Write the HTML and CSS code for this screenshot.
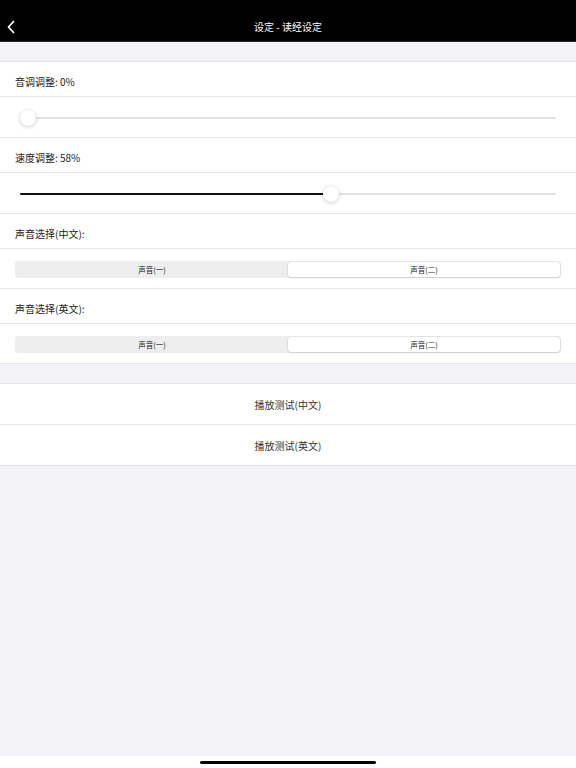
FILE: index.html
```html
<!DOCTYPE html>
<html lang="zh">
<head>
<meta charset="utf-8">
<link rel="stylesheet" href="styles.css">
</head>
<body>
<div class="screen">
  <header class="nav">
    <svg class="back" width="10" height="14" viewBox="0 0 10 14"><path d="M7.5 1.5 L2.5 7 L7.5 12.5" fill="none" stroke="#fff" stroke-width="1.8" stroke-linecap="round" stroke-linejoin="round"/></svg>
    <div class="title">设定 - 读经设定</div>
  </header>
  <div class="gap"></div>
  <section class="group">
    <div class="row label">音调调整: 0%</div>
    <div class="row slider-row">
      <div class="slider">
        <div class="track"></div>
        <div class="fill" style="width:0%"></div>
        <div class="thumb" style="left:calc(8px + 0 * (100% - 16px))"></div>
      </div>
    </div>
    <div class="row label">速度调整: 58%</div>
    <div class="row slider-row">
      <div class="slider">
        <div class="track"></div>
        <div class="fill" style="width:57%"></div>
        <div class="thumb" style="left:calc(9px + 0.58 * (100% - 16px))"></div>
      </div>
    </div>
    <div class="row label">声音选择(中文):</div>
    <div class="row seg-row">
      <div class="seg">
        <div class="seg-item">声音(一)</div>
        <div class="seg-item active">声音(二)</div>
      </div>
    </div>
    <div class="row label">声音选择(英文):</div>
    <div class="row seg-row">
      <div class="seg">
        <div class="seg-item">声音(一)</div>
        <div class="seg-item active">声音(二)</div>
      </div>
    </div>
  </section>
  <div class="gap gap2"></div>
  <section class="group">
    <div class="row button">播放测试(中文)</div>
    <div class="row button">播放测试(英文)</div>
  </section>
  <div class="fill-bg"></div>
  <div class="home"><div class="indicator"></div></div>
</div>
</body>
</html>
```
FILE: styles.css
```css
* { box-sizing: border-box; margin: 0; padding: 0; }
html, body { width: 576px; height: 768px; overflow: hidden; }
body {
  font-family: "Noto Sans CJK SC", "Noto Sans", sans-serif;
  background: #f2f2f7;
  color: #1c1c1e;
}
.screen { display: flex; flex-direction: column; height: 768px; }
.nav {
  height: 42px;
  background: #000;
  border-bottom: 1px solid #2a2a2a;
  display: flex;
  align-items: flex-end;
  justify-content: center;
  padding-bottom: 7px;
  position: relative;
  flex-shrink: 0;
}
.back { position: absolute; left: 6px; top: 20px; }
.title { color: #fff; font-size: 10px; line-height: 14px; }
.gap { height: 19px; flex-shrink: 0; }
.gap2 { height: 19px; }
.group {
  background: #fff;
  border-top: 1px solid #e4e4e8;
  flex-shrink: 0;
}
.row { border-bottom: 1px solid #e6e6ea; }
.label {
  height: 35px;
  font-size: 10px;
  line-height: 14px;
  padding: 13px 15px 0;
  color: #222;
}
.slider-row { height: 41px; padding: 0 20px; display: flex; align-items: center; }
.slider { position: relative; flex: 1; height: 16px; margin-top: 1px; }
.track {
  position: absolute; left: 0; right: 0; top: 7px; height: 2px;
  background: #e3e3e6; border-radius: 1px;
}
.fill {
  position: absolute; left: 0; top: 7px; height: 2px;
  background: #111; border-radius: 1px;
}
.thumb {
  position: absolute; top: 0; width: 16px; height: 16px;
  margin-left: -8px;
  border-radius: 50%;
  background: #fff;
  box-shadow: 0 1px 4px rgba(0,0,0,0.18), 0 0 0 0.5px rgba(0,0,0,0.06);
}
.seg-row { height: 40px; padding: 12px 15px 0 15px; }
.seg {
  display: flex;
  height: 17px;
  background: #eeeeef;
  border-radius: 3px;
  padding: 1px;
}
.seg-item {
  flex: 1;
  font-size: 7.5px;
  line-height: 15px;
  text-align: center;
  color: #1a1a1a;
  border-radius: 3px;
}
.seg-item.active {
  background: #fff;
  box-shadow: 0 0 0 0.5px rgba(0,0,0,0.08), 0 1px 2px rgba(0,0,0,0.1);
}
.button {
  height: 41px;
  font-size: 10px;
  line-height: 41px;
  text-align: center;
  color: #333;
}
.fill-bg { flex: 1; }
.home {
  height: 12px; background: #fff; flex-shrink: 0;
  display: flex; justify-content: center; padding-top: 5px;
}
.indicator { width: 176px; height: 3px; border-radius: 2px; background: #000; }
```
